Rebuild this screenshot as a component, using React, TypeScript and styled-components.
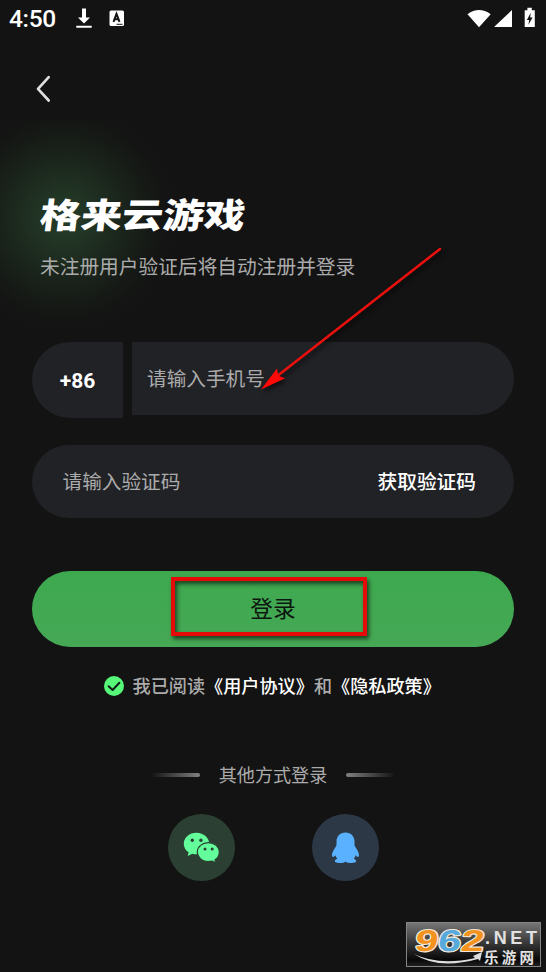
import React from "react";
import styled, { createGlobalStyle } from "styled-components";

const GlobalStyle = createGlobalStyle`
  *, *::before, *::after { box-sizing: border-box; }
  body { margin: 0; background: #131313; }
`;

const Screen = styled.main`
  position: relative;
  width: 546px;
  height: 972px;
  overflow: hidden;
  display: flex;
  flex-direction: column;
  background: #131313;
  color: #fff;
  font-family: "Noto Sans CJK SC", "Noto Sans", sans-serif;
  white-space: nowrap;
`;

const StatusBar = styled.header`
  display: flex;
  align-items: center;
  justify-content: space-between;
  height: 38px;
  padding: 0 9px;
`;

const StatusGroup = styled.div`
  display: flex;
  align-items: center;
  height: 38px;
`;

const Clock = styled.span`
  width: 66px;
  font: 500 24.5px/38px Roboto, sans-serif;
  letter-spacing: -0.35px;
`;

const Icon = styled.svg`
  display: block;
  flex: none;
`;

const NavBar = styled.nav`
  display: flex;
  height: 82px;
  padding: 37px 0 0 35px;
`;

const BackButton = styled.button`
  width: 17px;
  height: 28px;
  padding: 0;
  border: 0;
  background: none;
`;

const Hero = styled.section`
  height: 222px;
  padding: 70px 0 0 40px;
  background: radial-gradient(circle 122px at 64px 98px, #243d27 0%, #213424 22%, #1b261c 46%, #161a16 70%, #131413 86%, #131313 100%);
`;

const Title = styled.h1`
  width: 181px;
  height: 44px;
  margin: 0;
  font-size: 36px;
  line-height: 44px;
  font-weight: 900;
  transform: scale(1.14, 0.96) skewX(-6deg);
  transform-origin: 0 60%;
`;

const Subtitle = styled.p`
  margin: 17px 0 0;
  font-size: 19.72px;
  line-height: 30px;
  font-weight: 400;
  color: #ababab;
`;

const Form = styled.form`
  display: flex;
  flex-direction: column;
  width: 482px;
  margin: 0 32px;
`;

const PhoneRow = styled.div`
  display: grid;
  grid-template-columns: 91px 382px;
  gap: 9px;
  height: 103px;
  align-items: start;
`;

const CountryCode = styled.div`
  height: 76px;
  border-radius: 38px 0 0 38px;
  background: #212226;
  font: 700 21px/78px Roboto, sans-serif;
  text-align: center;
`;

const Field = styled.div<{ $joined?: boolean }>`
  display: flex;
  align-items: center;
  justify-content: space-between;
  height: 73px;
  padding: ${(p) => (p.$joined ? "0 30px 2px 15px" : "0 38px 1px 30.5px")};
  border-radius: ${(p) => (p.$joined ? "0 37px 37px 0" : "37px")};
  background: #212226;
`;

const Hint = styled.span`
  font-size: 19.65px;
  line-height: 30px;
  color: #ababab;
`;

const SendCode = styled.span`
  font-size: 19.7px;
  line-height: 30px;
  font-weight: 500;
`;

const LoginButton = styled.button`
  position: relative;
  height: 76px;
  margin-top: 53px;
  padding: 0 0 2px;
  border: 0;
  border-radius: 38px;
  background: linear-gradient(#3da94f, #46a855);
  color: #0c150e;
  font: 400 22.7px/74px "Noto Sans CJK SC", sans-serif;
`;

const Highlight = styled.span`
  position: absolute;
  left: 139px;
  top: 6px;
  width: 196px;
  height: 59px;
  border: 4px solid #e50b08;
  box-shadow: 2px 3px 4px rgba(0, 0, 0, 0.6), inset 2px 3px 4px rgba(0, 0, 0, 0.6);
`;

const Agreement = styled.div`
  display: flex;
  align-items: center;
  height: 30px;
  margin: 24px 0 0 103px;
`;

const AgreementText = styled.p`
  margin: -2px 0 0 7.5px;
  font-size: 18.15px;
  line-height: 30px;
  font-weight: 500;
  color: #ababab;
`;

const Policy = styled.span`
  color: #fff;
`;

const OtherLogin = styled.div`
  display: flex;
  align-items: center;
  justify-content: center;
  gap: 18.5px;
  height: 30px;
  margin-top: 58px;
  font-size: 18.1px;
  line-height: 30px;
  color: #ababab;
`;

const Rule = styled.span<{ $side: "left" | "right" }>`
  width: 49px;
  height: 4px;
  margin-top: 1px;
  border-radius: 2px;
  background: linear-gradient(to ${(p) => p.$side}, #808080, #131313);
`;

const Providers = styled.div`
  display: flex;
  gap: 77px;
  margin: 25px 0 0 167.5px;
`;

const Provider = styled.button<{ $tone: string }>`
  display: flex;
  align-items: center;
  justify-content: center;
  width: 67px;
  height: 67px;
  padding: 0;
  border: 0;
  border-radius: 50%;
  background: ${(p) => p.$tone};
`;

const Arrow = styled.svg`
  position: absolute;
  left: 250px;
  top: 235px;
  filter: drop-shadow(2px 3px 2px rgba(0, 0, 0, 0.6));
`;

const Watermark = styled.svg`
  position: absolute;
  left: 406px;
  top: 922px;
`;

export default function App() {
  return (
    <Screen>
      <GlobalStyle />
      <StatusBar>
        <StatusGroup>
          <Clock>4:50</Clock>
          <Icon width="18" height="22" viewBox="0 0 18 22">
            <path d="M7 0.5h4v9h4l-6 6-6-6h4zM1.3 17.8h15.400v2H1.300z" fill="#fff" />
          </Icon>
          <Icon width="33" height="18" viewBox="0 0 33 18">
            <rect x="16.5" y="0.5" width="14.5" height="15.5" rx="1.5" fill="#fff" />
            <path d="M20.5 11.8l3-8 3 8M21.5 9.3h4" fill="none" stroke="#131313" strokeWidth="2" />
            <path d="M23.5 14.3h6" stroke="#131313" strokeWidth="1" />
          </Icon>
        </StatusGroup>
        <StatusGroup>
          <Icon width="70" height="24" viewBox="0 0 70 24">
            <path d="M0.5 7.2Q12 -1 23.7 7.2L12 20.3zM27.5 20V19.5L45 3v17zM57.7 3.2h2.7V.7h4.4v2.5h3V20h-10.1z" fill="#fff" />
            <path d="M63.7 5.8l-3.8 7.2h2.3l-.8 4.7 4.2-7.3h-2.4z" fill="#131313" />
          </Icon>
        </StatusGroup>
      </StatusBar>

      <NavBar>
        <BackButton aria-label="返回">
          <Icon width="17" height="28" viewBox="0 0 17 28">
            <path d="M13.7 2.2L3 13.8l10.7 11.7" fill="none" stroke="#dedede" strokeWidth="2.7" strokeLinecap="round" strokeLinejoin="round" />
          </Icon>
        </BackButton>
      </NavBar>

      <Hero>
        <Title>格来云游戏</Title>
        <Subtitle>未注册用户验证后将自动注册并登录</Subtitle>
      </Hero>

      <Form onSubmit={(e) => e.preventDefault()}>
        <PhoneRow>
          <CountryCode>+86</CountryCode>
          <Field $joined>
            <Hint>请输入手机号</Hint>
          </Field>
        </PhoneRow>
        <Field>
          <Hint>请输入验证码</Hint>
          <SendCode>获取验证码</SendCode>
        </Field>
        <LoginButton type="submit">
          登录
          <Highlight />
        </LoginButton>
      </Form>

      <Agreement>
        <Icon width="22" height="22" viewBox="0 0 22 22">
          <circle cx="11" cy="11" r="10" fill="#56f779" />
          <path d="M5.6 11.2l4 3.8 6.8-7.2" fill="none" stroke="#131b15" strokeWidth="2" strokeLinecap="round" strokeLinejoin="round" />
        </Icon>
        <AgreementText>
          我已阅读<Policy>《用户协议》</Policy>和<Policy>《隐私政策》</Policy>
        </AgreementText>
      </Agreement>

      <OtherLogin>
        <Rule $side="left" />
        <span>其他方式登录</span>
        <Rule $side="right" />
      </OtherLogin>

      <Providers>
        <Provider $tone="#2b4032" aria-label="微信">
          <Icon width="37" height="32" viewBox="0 0 37 32">
            <path d="M13.5.7C6.4.7.8 5.500.8 11.700c0 3.600 1.800 6.600 4.800 8.600l-.9 3.600 4.600-2.200c1.300.4 2.800.6 4.200.6 7.100 0 12.700-4.800 12.700-10.600S20.600.7 13.500.7z" fill="#64fd9b" />
            <path d="M25.4 10.6c-6.2 0-11.1 4.2-11.1 9.5s4.9 9.5 11.1 9.5c1.3 0 2.6-.2 3.7-.5l3.7 1.9-.8-3.2c2.7-1.8 4.3-4.5 4.3-7.6 0-5.4-4.8-9.600-10.900-9.600z" fill="#64fd9b" stroke="#2b4032" strokeWidth="1.2" />
            <g fill="#2b4032">
              <circle cx="9.3" cy="8.3" r="1.7" />
              <circle cx="17.9" cy="8.3" r="1.7" />
              <circle cx="22" cy="17" r="1.5" />
              <circle cx="29.2" cy="17" r="1.5" />
            </g>
          </Icon>
        </Provider>
        <Provider $tone="#2d3846" aria-label="QQ">
          <Icon width="29" height="32" viewBox="0 0 29 32">
            <path d="M14.5.5C9 .5 5.5 4.500 5.500 9.300v3.400c0 1.800-3.900 5.800-4.400 9.400-.3 2 .3 3.100.9 3 .8-.1 1.700-1 2.300-1.800.4 1.400 1 2.400 2 3.400-1.500.7-2.500 1.500-2.500 2.400 0 2.800 9.200 2.300 10.700.4 1.500 1.900 10.700 2.400 10.700-.4 0-.9-1-1.700-2.500-2.400 1-1 1.600-2 2-3.400.6.8 1.500 1.700 2.300 1.800.6.1 1.200-1 .9-3-.5-3.600-4.400-7.600-4.400-9.400V9.300C23.500 4.500 20 .5 14.500.5z" fill="#5ab1ff" />
          </Icon>
        </Provider>
      </Providers>

      <Arrow width="200" height="164" viewBox="0 0 200 164">
        <path d="M190 14L26 142" stroke="#ec100d" strokeWidth="2.5" strokeLinecap="round" />
        <path d="M11 154.5L27 133.5l1.3 7.3 7 2.4z" fill="#ff0808" />
      </Arrow>

      <Watermark width="136" height="46" viewBox="0 0 136 46">
        <defs>
          <linearGradient id="plate" x1="0" y1="0" x2="0" y2="1">
            <stop offset="0" stopColor="#777" />
            <stop offset=".5" stopColor="#333" />
            <stop offset=".85" stopColor="#080808" />
            <stop offset="1" stopColor="#222" />
          </linearGradient>
        </defs>
        <rect x=".5" y=".5" width="134" height="44" fill="url(#plate)" stroke="#858585" />
        <path d="M8 32Q33 44 69 36l-2-2 9-4-2 9-2-2Q32 48 8 32z" fill="#ddd" />
        <g transform="translate(8 28.5) skewX(-8)" fontFamily="Liberation Sans, sans-serif" fontWeight="700" fontSize="30" stroke="#f3e9da" strokeWidth="2.2" paintOrder="stroke" strokeLinejoin="round">
          <text x="0" y="0" textLength="23" lengthAdjust="spacingAndGlyphs" fill="#f3921d">9</text>
          <text x="23" y="0" textLength="23" lengthAdjust="spacingAndGlyphs" fill="#56a9dc">6</text>
          <text x="46" y="0" textLength="23" lengthAdjust="spacingAndGlyphs" fill="#f3921d">2</text>
        </g>
        <text x="79" y="22" fontFamily="Liberation Sans, sans-serif" fontWeight="700" fontSize="18" textLength="52" fill="#e2e2e2">.NET</text>
        <text x="78" y="40.5" fontFamily="Noto Sans CJK SC, sans-serif" fontWeight="700" fontSize="14.5" textLength="50" fill="#e2e2e2">乐游网</text>
      </Watermark>
    </Screen>
  );
}
